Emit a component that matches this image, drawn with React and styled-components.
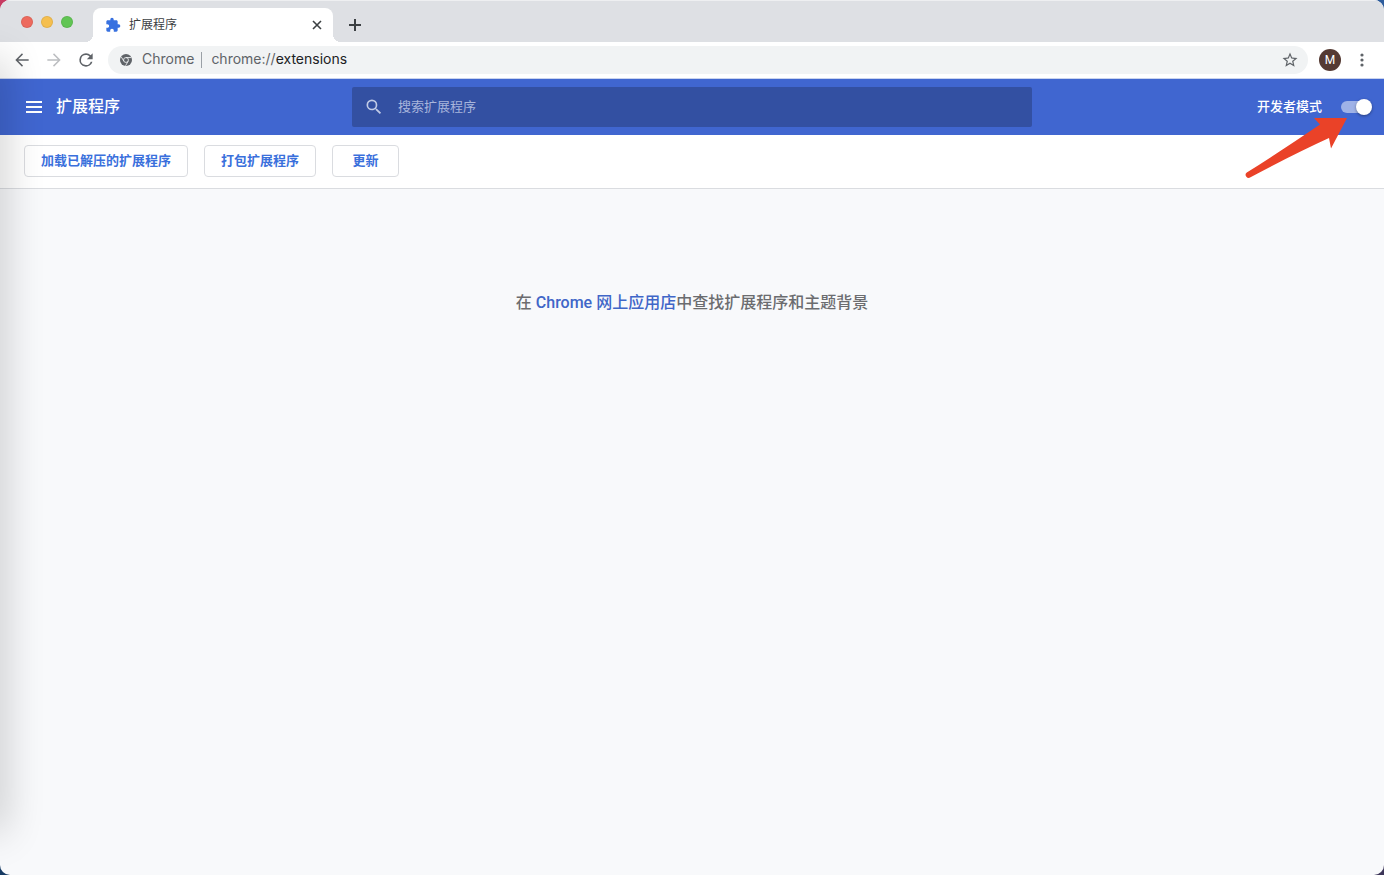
import React, { useState } from "react";
import styled, { createGlobalStyle } from "styled-components";

const App = () => {
  const [dev_mode, setDevMode] = useState(true);
  const [query, setQuery] = useState("");

  return (
    <>
      <GlobalStyle />
      <Window>
        <TabStrip>
          <Lights>
            <Light color="#ed6a5e" />
            <Light color="#f5bf4f" />
            <Light color="#61c554" />
          </Lights>
          <Tab>
            <svg width="16" height="16" viewBox="0 0 24 24" fill="#3871e0">
              <path d="M20.5 11H19V7c0-1.1-.9-2-2-2h-4V3.5a2.5 2.5 0 0 0-5 0V5H4c-1.1 0-1.99.9-1.99 2v3.8H3.5c1.49 0 2.7 1.21 2.7 2.7s-1.21 2.7-2.7 2.7H2V20c0 1.1.9 2 2 2h3.8v-1.5c0-1.49 1.21-2.7 2.7-2.7s2.7 1.21 2.7 2.7V22H17c1.1 0 2-.9 2-2v-4h1.5a2.5 2.5 0 0 0 0-5z" />
            </svg>
            <TabTitle>扩展程序</TabTitle>
            <StripButton aria-label="关闭">
              <svg width="10" height="10" viewBox="0 0 10 10" stroke="#3c4043" strokeWidth="1.6">
                <path d="M1 1l8 8M9 1l-8 8" />
              </svg>
            </StripButton>
          </Tab>
          <StripButton aria-label="打开新的标签页">
            <svg width="12" height="12" viewBox="0 0 12 12" stroke="#3c4043" strokeWidth="2">
              <path d="M6 0v12M0 6h12" />
            </svg>
          </StripButton>
        </TabStrip>

        <Toolbar>
          <ToolButton aria-label="后退">
            <svg width="20" height="20" viewBox="0 0 24 24" fill="#5f6368">
              <path d="M20 11.1H7.4l5.8-5.8L12 4l-8 8 8 8 1.2-1.3-5.8-5.8H20z" />
            </svg>
          </ToolButton>
          <ToolButton aria-label="前进">
            <svg width="20" height="20" viewBox="0 0 24 24" fill="#bcbec1">
              <path d="M4 11.1h12.6l-5.8-5.8L12 4l8 8-8 8-1.2-1.3 5.8-5.8H4z" />
            </svg>
          </ToolButton>
          <ToolButton aria-label="重新加载">
            <svg width="20" height="20" viewBox="0 0 24 24" fill="#5f6368">
              <path d="M17.65 6.35A7.96 7.96 0 0 0 12 4a8 8 0 1 0 7.73 10h-2.08A6 6 0 1 1 12 6c1.66 0 3.14.69 4.22 1.78L13 11h7V4l-2.35 2.35z" />
            </svg>
          </ToolButton>
          <AddressBar>
            <svg width="12" height="12" viewBox="0 0 24 24">
              <circle cx="12" cy="12" r="12" fill="#5f6368" />
              <circle cx="12" cy="12" r="4.9" fill="none" stroke="#f1f3f4" strokeWidth="1.7" />
              <path
                d="M12 7.1h10.6M7.8 14.5L2.4 5.6M16.2 14.5l-5.2 9.2"
                stroke="#f1f3f4"
                strokeWidth="1.7"
              />
            </svg>
            <SiteName>Chrome</SiteName>
            <Divider />
            <Address>
              chrome://<b>extensions</b>
            </Address>
            <StarButton aria-label="为此标签页添加书签">
              <svg width="18" height="18" viewBox="0 0 24 24" fill="#5f6368">
                <path d="M22 9.24l-7.19-.62L12 2 9.19 8.63 2 9.24l5.46 4.73L5.82 21 12 17.27 18.18 21l-1.63-7.03L22 9.24zM12 15.4l-3.76 2.27 1-4.28-3.32-2.88 4.38-.38L12 6.1l1.71 4.04 4.38.38-3.32 2.88 1 4.28L12 15.4z" />
              </svg>
            </StarButton>
          </AddressBar>
          <ToolButton aria-label="用户">
            <Avatar>M</Avatar>
          </ToolButton>
          <ToolButton aria-label="菜单">
            <svg width="4" height="14" viewBox="0 0 4 14" fill="#5f6368">
              <circle cx="2" cy="2" r="1.6" />
              <circle cx="2" cy="7" r="1.6" />
              <circle cx="2" cy="12" r="1.6" />
            </svg>
          </ToolButton>
        </Toolbar>

        <Header>
          <HeaderLeft>
            <MenuButton aria-label="主菜单">
              <svg width="16" height="12" viewBox="0 0 16 12" fill="#fff">
                <path d="M0 0h16v2H0zM0 5h16v2H0zM0 10h16v2H0z" />
              </svg>
            </MenuButton>
            <Title>扩展程序</Title>
          </HeaderLeft>
          <SearchBox>
            <svg width="20" height="20" viewBox="0 0 24 24" fill="#c1cbe6">
              <path d="M15.5 14h-.79l-.28-.27A6.47 6.47 0 0 0 16 9.5 6.5 6.5 0 1 0 9.5 16c1.61 0 3.09-.59 4.23-1.57l.27.28v.79l5 4.99L20.49 19l-4.99-5zm-6 0a4.5 4.5 0 1 1 0-9 4.5 4.5 0 0 1 0 9z" />
            </svg>
            <SearchInput
              type="text"
              aria-label="搜索扩展程序"
              placeholder="搜索扩展程序"
              value={query}
              onChange={(e) => setQuery(e.target.value)}
            />
          </SearchBox>
          <DevMode>
            开发者模式
            <Toggle
              type="checkbox"
              checked={dev_mode}
              onChange={(e) => setDevMode(e.target.checked)}
            />
          </DevMode>
          <Arrow width="104" height="64" viewBox="0 0 104 64" fill="#ea4228">
            <path d="M2.8 56.6 Q40 33 76 8.5 L70 2 L103 2 L87 32.5 L85 22 Q50 38 6.5 61.2 A2.8 2.8 0 0 1 2.8 56.6z" />
          </Arrow>
        </Header>

        {dev_mode && (
          <Actions>
            <ActionButton>加载已解压的扩展程序</ActionButton>
            <ActionButton>打包扩展程序</ActionButton>
            <ActionButton>更新</ActionButton>
          </Actions>
        )}

        <Content>
          <Message>
            在 <a href="#store">Chrome 网上应用店</a>中查找扩展程序和主题背景
          </Message>
        </Content>
        <EdgeShadow />
      </Window>
    </>
  );
};

export default App;

const GlobalStyle = createGlobalStyle`
  * {
    box-sizing: border-box;
  }
  body {
    margin: 0;
    font-family: Roboto, "Noto Sans CJK SC", sans-serif;
    background:
      linear-gradient(90deg, #c73a62 50%, #2d5c9c 50%) top / 100% 50% no-repeat,
      linear-gradient(90deg, #163a63 50%, #3c3558 50%);
  }
  button {
    padding: 0;
    border: none;
    background: none;
    font-family: inherit;
    cursor: pointer;
  }
`;

const Window = styled.div`
  position: relative;
  display: flex;
  flex-direction: column;
  min-height: 100vh;
  overflow: hidden;
  border-radius: 10px;
  background-color: #f8f9fb;
`;

const TabStrip = styled.div`
  display: flex;
  align-items: center;
  height: 42px;
  padding: 8px 8px 0 21px;
  background-color: #dee0e4;
  box-shadow: inset 0 1px 0 #eeeff1;
`;

const Lights = styled.div`
  display: flex;
  gap: 8px;
  padding-bottom: 7px;
  margin-right: 20px;
`;

const Light = styled.span`
  width: 12px;
  height: 12px;
  border-radius: 50%;
  background-color: ${(props) => props.color};
  box-shadow: inset 0 0 0 1px rgba(0, 0, 0, 0.08);
`;

const Tab = styled.div`
  position: relative;
  display: flex;
  align-items: center;
  width: 240px;
  height: 34px;
  padding: 0 6px 0 12px;
  margin-right: 12px;
  border-radius: 8px 8px 0 0;
  background-color: #fff;
  /* flared feet of the active tab */
  &::before,
  &::after {
    content: "";
    position: absolute;
    bottom: 0;
    width: 8px;
    height: 8px;
  }
  &::before {
    right: 100%;
    background: radial-gradient(circle at 0 0, transparent 8px, #fff 8px);
  }
  &::after {
    left: 100%;
    background: radial-gradient(circle at 100% 0, transparent 8px, #fff 8px);
  }
`;

const TabTitle = styled.span`
  flex: 1;
  margin-left: 8px;
  font-size: 12px;
  line-height: 18px;
  color: #3c4043;
`;

const StripButton = styled.button`
  display: grid;
  place-items: center;
  width: 20px;
  height: 20px;
`;

const Toolbar = styled.div`
  display: flex;
  align-items: center;
  gap: 4px;
  height: 37px;
  padding: 0 8px;
  border-bottom: 1px solid #c9d3ee;
  background-color: #fff;
`;

const ToolButton = styled.button`
  display: grid;
  place-items: center;
  width: 28px;
  height: 28px;
`;

const AddressBar = styled.div`
  flex: 1;
  display: flex;
  align-items: center;
  height: 28px;
  padding: 0 8px 0 12px;
  margin: 0 4px;
  border-radius: 14px;
  background-color: #f1f3f4;
  font-family: Inter, sans-serif;
  font-size: 14px;
  line-height: 16px;
  color: #5f6368;
`;

const SiteName = styled.span`
  padding-bottom: 2px;
  margin-left: 10px;
`;

const Divider = styled.span`
  width: 1px;
  height: 16px;
  margin: 0 9px 0 7px;
  background-color: #9aa0a6;
`;

const Address = styled.span`
  flex: 1;
  padding-bottom: 2px;
  b {
    font-weight: 400;
    color: #202124;
  }
`;

const StarButton = styled.button`
  display: grid;
  place-items: center;
  width: 20px;
  height: 20px;
`;

const Avatar = styled.span`
  width: 22px;
  height: 22px;
  border-radius: 50%;
  background-color: #553a33;
  font-size: 12px;
  line-height: 22px;
  text-align: center;
  color: #fff;
`;

const Header = styled.header`
  position: relative;
  display: grid;
  grid-template-columns: 1fr minmax(0, 680px) 1fr;
  align-items: center;
  height: 56px;
  background-color: #4066d0;
  color: #fff;
`;

const HeaderLeft = styled.div`
  display: flex;
  align-items: center;
  padding-left: 20px;
`;

const MenuButton = styled.button`
  display: grid;
  place-items: center;
  width: 28px;
  height: 28px;
  margin-right: 8px;
`;

const Title = styled.h1`
  margin: 0;
  font-size: 16px;
  font-weight: 500;
  line-height: 24px;
`;

const SearchBox = styled.label`
  display: flex;
  align-items: center;
  height: 40px;
  padding: 0 12px;
  border-radius: 2px;
  background-color: #3350a2;
`;

const SearchInput = styled.input`
  flex: 1;
  min-width: 0;
  margin-left: 14px;
  padding: 0 0 2px;
  border: none;
  outline: none;
  background: none;
  font-family: inherit;
  font-size: 13px;
  color: #fff;
  &::placeholder {
    color: #a8b5dc;
    opacity: 1;
  }
`;

const DevMode = styled.label`
  display: flex;
  align-items: center;
  justify-content: flex-end;
  gap: 19px;
  padding-right: 15px;
  font-size: 13px;
  font-weight: 500;
  line-height: 20px;
`;

const Toggle = styled.input`
  appearance: none;
  position: relative;
  width: 28px;
  height: 12px;
  margin: 0;
  border-radius: 6px;
  background-color: #9fb2e7;
  cursor: pointer;
  &::after {
    content: "";
    position: absolute;
    top: -2px;
    left: ${(props) => (props.checked ? "15px" : "-3px")};
    width: 16px;
    height: 16px;
    border-radius: 50%;
    background-color: #fff;
    box-shadow: 0 1px 3px rgba(0, 0, 0, 0.4);
  }
`;

const Arrow = styled.svg`
  position: absolute;
  top: 37px;
  right: 36px;
  z-index: 1;
  pointer-events: none;
`;

const Actions = styled.div`
  display: flex;
  gap: 16px;
  padding: 10px 24px 11px;
  border-bottom: 1px solid #dadce0;
  background-color: #fff;
`;

const ActionButton = styled.button`
  && {
    min-width: 67px;
    height: 32px;
    padding: 0 16px 3px;
    border: 1px solid #dadce0;
    border-radius: 4px;
    font-size: 13px;
    font-weight: 600;
    color: #3a70dc;
  }
`;

const Content = styled.main`
  flex: 1;
  padding: 102px 24px 24px;
`;

const Message = styled.p`
  margin: 0;
  font-size: 16px;
  font-weight: 500;
  line-height: 24px;
  text-align: center;
  color: #6b6c6f;
  a {
    color: #4066c8;
    text-decoration: none;
  }
`;

const EdgeShadow = styled.div`
  position: absolute;
  top: 60px;
  bottom: 44px;
  left: -20px;
  width: 20px;
  box-shadow: 0 0 40px rgba(0, 0, 0, 0.3);
  pointer-events: none;
`;
